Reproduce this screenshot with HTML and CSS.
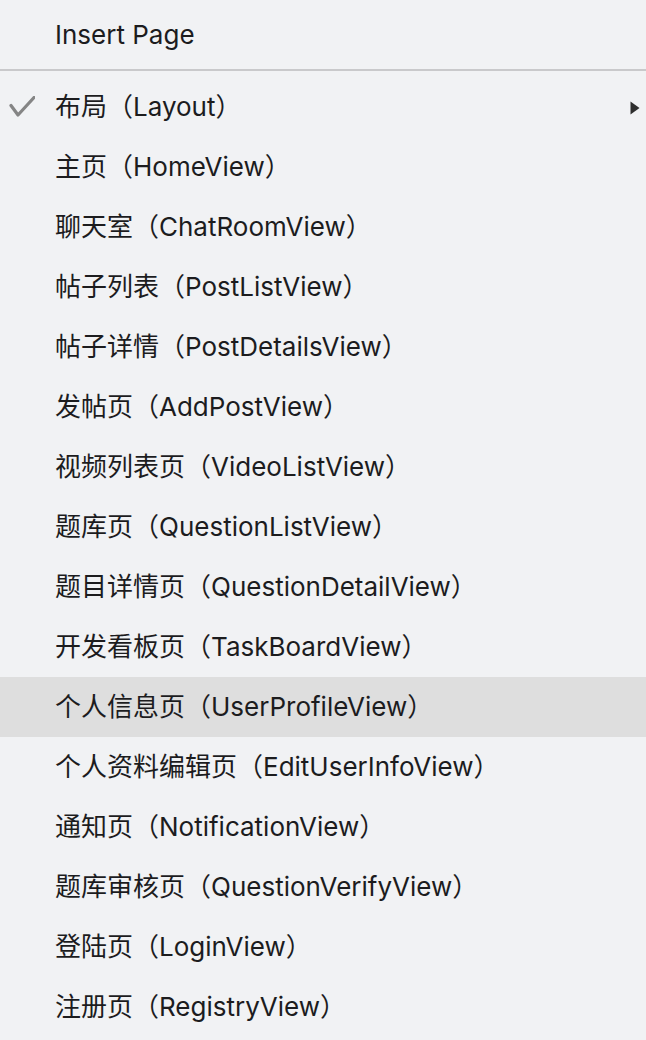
FILE: index.html
```html
<!DOCTYPE html>
<html lang="zh-CN">
<head>
<meta charset="utf-8">
<title>Insert Page</title>
<link rel="stylesheet" href="styles.css">
</head>
<body>
<div class="menu">
  <div class="item header"><span class="label">Insert Page</span></div>
  <div class="separator"></div>
  <div class="item checked">
    <svg class="check" viewBox="0 0 26 22" width="26" height="22"><path d="M2 9.5 L9 19 L25 1.5" fill="none" stroke="#858585" stroke-width="3.2" stroke-linecap="round" stroke-linejoin="round"/></svg>
    <span class="label">布局（Layout）</span>
    <svg class="arrow" viewBox="0 0 10 14" width="10" height="14"><path d="M0.5 0.5 L9.5 7 L0.5 13.5 Z" fill="#2e2e2e"/></svg>
  </div>
  <div class="item"><span class="label">主页（HomeView）</span></div>
  <div class="item"><span class="label">聊天室（ChatRoomView）</span></div>
  <div class="item"><span class="label">帖子列表（PostListView）</span></div>
  <div class="item"><span class="label">帖子详情（PostDetailsView）</span></div>
  <div class="item"><span class="label">发帖页（AddPostView）</span></div>
  <div class="item"><span class="label">视频列表页（VideoListView）</span></div>
  <div class="item"><span class="label">题库页（QuestionListView）</span></div>
  <div class="item"><span class="label">题目详情页（QuestionDetailView）</span></div>
  <div class="item"><span class="label">开发看板页（TaskBoardView）</span></div>
  <div class="item hover"><span class="label">个人信息页（UserProfileView）</span></div>
  <div class="item"><span class="label">个人资料编辑页（EditUserInfoView）</span></div>
  <div class="item"><span class="label">通知页（NotificationView）</span></div>
  <div class="item"><span class="label">题库审核页（QuestionVerifyView）</span></div>
  <div class="item"><span class="label">登陆页（LoginView）</span></div>
  <div class="item"><span class="label">注册页（RegistryView）</span></div>
</div>
</body>
</html>
```

FILE: styles.css
```css
html, body {
  margin: 0;
  padding: 0;
  background: #f1f2f4;
}
body {
  width: 646px;
  height: 1040px;
  overflow: hidden;
  font-family: "Inter", "Noto Sans CJK SC", sans-serif;
  font-size: 26px;
  color: #1c1c1e;
}
.menu {
  padding-top: 5px;
  display: flex;
  flex-direction: column;
}
.item {
  position: relative;
  box-sizing: border-box;
  height: 60px;
  display: flex;
  align-items: center;
  padding-left: 55px;
  padding-right: 6px;
  padding-bottom: 0;
}
.item.hover {
  background: #dedede;
}
.separator {
  height: 2px;
  margin: 4px 0 6px;
  background: #c9c9cb;
}
.label {
  white-space: nowrap;
  line-height: 30px;
}
.check {
  position: absolute;
  left: 9px;
  top: 19px;
}
.arrow {
  position: absolute;
  right: 6px;
  top: 24px;
}
```
